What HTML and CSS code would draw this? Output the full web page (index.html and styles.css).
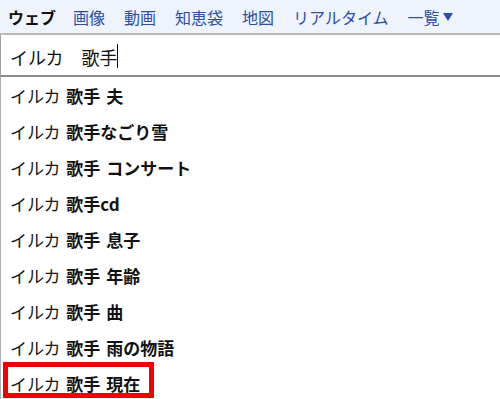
FILE: index.html
```html
<!DOCTYPE html>
<html lang="ja">
<head>
<meta charset="utf-8">
<link rel="stylesheet" href="styles.css">
</head>
<body>
<div class="page">
  <nav class="tabs">
    <span class="tab active">ウェブ</span>
    <a class="tab">画像</a>
    <a class="tab">動画</a>
    <a class="tab">知恵袋</a>
    <a class="tab">地図</a>
    <a class="tab">リアルタイム</a>
    <a class="tab more">一覧<svg class="tri" width="10" height="8" viewBox="0 0 10 8"><polygon points="0,0 10,0 5,8" fill="#2b4fa6"/></svg></a>
  </nav>
  <div class="search">
    <span class="query">イルカ　歌手</span><span class="caret"></span>
  </div>
  <ul class="suggest">
    <li class="row"><span class="text">イルカ <b>歌手 夫</b></span></li>
    <li class="row"><span class="text">イルカ <b>歌手なごり雪</b></span></li>
    <li class="row"><span class="text">イルカ <b>歌手 コンサート</b></span></li>
    <li class="row"><span class="text">イルカ <b>歌手cd</b></span></li>
    <li class="row"><span class="text">イルカ <b>歌手 息子</b></span></li>
    <li class="row"><span class="text">イルカ <b>歌手 年齢</b></span></li>
    <li class="row"><span class="text">イルカ <b>歌手 曲</b></span></li>
    <li class="row"><span class="text">イルカ <b>歌手 雨の物語</b></span></li>
    <li class="row marked"><span class="text">イルカ <b>歌手 現在</b></span><span class="highlight"></span></li>
  </ul>
</div>
</body>
</html>
```
FILE: styles.css
```css
html, body {
  margin: 0;
  padding: 0;
  background: #ffffff;
}
body {
  width: 500px;
  height: 399px;
  overflow: hidden;
  font-family: "Noto Sans CJK JP", "Noto Sans", sans-serif;
  color: #111111;
}
.page {
  display: flex;
  flex-direction: column;
}
.tabs {
  height: 33px;
  background: #eef3fc;
  border-bottom: 2px solid #b9b9b9;
  display: flex;
  align-items: center;
  gap: 19px;
  padding-left: 8px;
  font-size: 16px;
  line-height: 1;
}
.tab {
  color: #2b4fa6;
  text-decoration: none;
  white-space: nowrap;
  display: flex;
  align-items: center;
}
.tab.active {
  color: #111111;
  font-weight: bold;
  margin-right: -2px;
}
.tri {
  margin-left: 3px;
  margin-top: 1px;
}
.search {
  box-sizing: border-box;
  height: 42px;
  border-left: 1px solid #a0a0a0;
  border-bottom: 2px solid #8c8c8c;
  display: flex;
  align-items: center;
  padding-left: 9px;
  padding-top: 3px;
  font-size: 18px;
  line-height: 1;
}
.caret {
  width: 1px;
  height: 24px;
  background: #111111;
  margin-top: -2px;
}
.suggest {
  list-style: none;
  margin: 0;
  padding: 0;
  border-left: 1px solid #b0b0b0;
}
.row {
  position: relative;
  box-sizing: border-box;
  height: 36px;
  display: flex;
  align-items: center;
  padding-left: 9px;
  font-size: 17px;
  line-height: 1;
  white-space: pre;
  word-spacing: 2px;
}
.row b {
  font-weight: bold;
}
.highlight {
  position: absolute;
  left: 2px;
  top: -3px;
  width: 151px;
  height: 36px;
  border: 5px solid #f20000;
  box-sizing: border-box;
}
```
